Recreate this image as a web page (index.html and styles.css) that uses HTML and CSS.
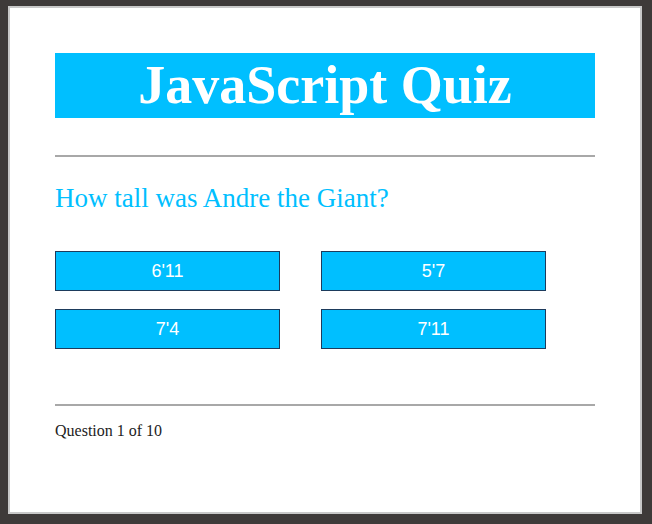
FILE: index.html
```html
<!DOCTYPE html>
<html lang="en">
<head>
<meta charset="utf-8">
<title>JavaScript Quiz</title>
<link rel="stylesheet" href="styles.css">
</head>
<body>
<div class="frame">
  <h1 class="title">JavaScript Quiz</h1>
  <div class="rule rule-top"></div>
  <p class="question">How tall was Andre the Giant?</p>
  <div class="choices">
    <button class="choice">6'11</button>
    <button class="choice">5'7</button>
    <button class="choice">7'4</button>
    <button class="choice">7'11</button>
  </div>
  <div class="rule rule-bottom"></div>
  <p class="progress">Question 1 of 10</p>
</div>
</body>
</html>
```

FILE: styles.css
```css
html, body {
  margin: 0;
  height: 100%;
}
body {
  background: #3e3a39;
  padding: 6px 10px 10px 8px;
  box-sizing: border-box;
  font-family: "Liberation Serif", "Times New Roman", serif;
}
.frame {
  box-sizing: border-box;
  height: 508px;
  border: 2px solid #c8c8c8;
  background: #ffffff;
  padding: 45px;
}
.title {
  margin: 0;
  height: 65px;
  line-height: 65px;
  background: #00bfff;
  color: #ffffff;
  text-align: center;
  font-family: "Liberation Serif", "Times New Roman", serif;
  font-weight: bold;
  font-size: 54px;
}
.rule {
  height: 2px;
  background: #a8a8a8;
}
.rule-top {
  margin-top: 37px;
}
.question {
  margin: 26px 0 0;
  font-size: 27px;
  line-height: 31px;
  color: #00bfff;
}
.choices {
  margin-top: 37px;
  display: grid;
  grid-template-columns: 225px 225px;
  column-gap: 41px;
  row-gap: 18px;
}
.choice {
  box-sizing: border-box;
  height: 40px;
  margin: 0;
  padding: 1px 0 0;
  border: 1px solid #1d3b5c;
  background: #00bfff;
  color: #ffffff;
  font-family: "Liberation Sans", Arial, sans-serif;
  font-size: 18px;
  text-align: center;
}
.rule-bottom {
  margin-top: 55px;
}
.progress {
  margin: 16px 0 0;
  font-size: 16px;
  line-height: 18px;
  color: #222222;
}
```
